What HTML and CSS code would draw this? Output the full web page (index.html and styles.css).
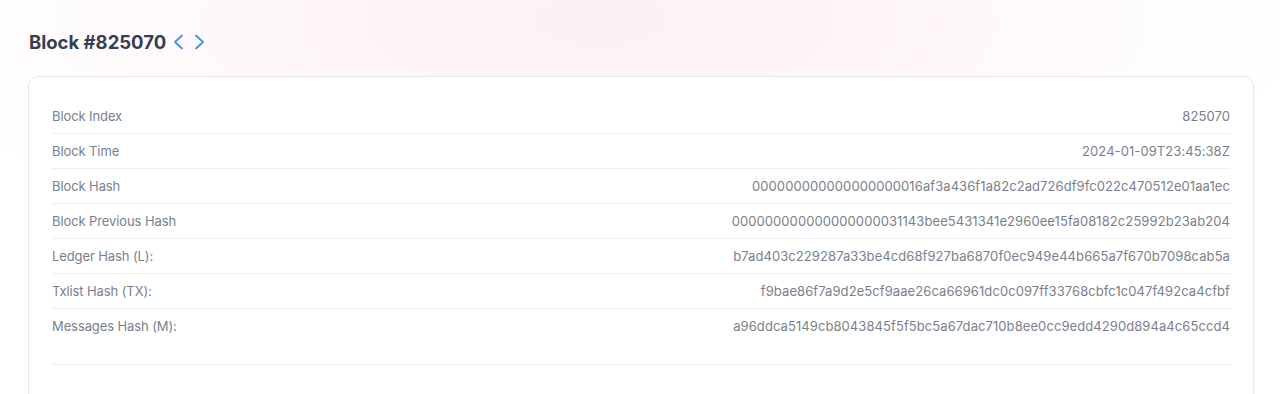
FILE: index.html
```html
<!DOCTYPE html>
<html lang="en">
<head>
  <meta charset="UTF-8">
  <meta name="viewport" content="width=device-width, initial-scale=1.0">
  <title>Block #825070</title>
  <link rel="stylesheet" href="styles.css">
</head>
<body>
  <div class="page">
    <header class="block-header">
      <h2>Block #825070</h2>
      <a class="nav-arrow" href="#" aria-label="Previous block">
        <svg width="12" height="16" viewBox="0 0 12 16"><path d="M10 1.5 L3 8 L10 14.5" fill="none" stroke="currentColor" stroke-width="1.8" stroke-linecap="round" stroke-linejoin="round"/></svg>
      </a>
      <a class="nav-arrow" href="#" aria-label="Next block">
        <svg width="12" height="16" viewBox="0 0 12 16"><path d="M2 1.5 L9 8 L2 14.5" fill="none" stroke="currentColor" stroke-width="1.8" stroke-linecap="round" stroke-linejoin="round"/></svg>
      </a>
    </header>

    <div class="card">
      <div class="info-row">
        <span class="label">Block Index</span>
        <span class="value">825070</span>
      </div>
      <div class="info-row">
        <span class="label">Block Time</span>
        <span class="value">2024-01-09T23:45:38Z</span>
      </div>
      <div class="info-row">
        <span class="label">Block Hash</span>
        <span class="value">000000000000000000016af3a436f1a82c2ad726df9fc022c470512e01aa1ec</span>
      </div>
      <div class="info-row">
        <span class="label">Block Previous Hash</span>
        <span class="value">000000000000000000031143bee5431341e2960ee15fa08182c25992b23ab204</span>
      </div>
      <div class="info-row">
        <span class="label">Ledger Hash (L):</span>
        <span class="value">b7ad403c229287a33be4cd68f927ba6870f0ec949e44b665a7f670b7098cab5a</span>
      </div>
      <div class="info-row">
        <span class="label">Txlist Hash (TX):</span>
        <span class="value">f9bae86f7a9d2e5cf9aae26ca66961dc0c097ff33768cbfc1c047f492ca4cfbf</span>
      </div>
      <div class="info-row last">
        <span class="label">Messages Hash (M):</span>
        <span class="value">a96ddca5149cb8043845f5f5bc5a67dac710b8ee0cc9edd4290d894a4c65ccd4</span>
      </div>
      <hr class="divider">
      <div class="spacer"></div>
    </div>
  </div>
</body>
</html>
```

FILE: styles.css
```css
/* General Styles */
body {
  margin: 0;
  font-family: Inter, "Noto Sans", Arial, sans-serif;
  background: radial-gradient(ellipse 700px 260px at 600px 20px, #fdf0f6 0%, #fef7fa 50%, #ffffff 100%);
  background-color: #fff;
  min-height: 394px;
  overflow: hidden;
}

.page {
  padding: 28px 26px 0 28px;
}

/* Header */
.block-header {
  display: flex;
  align-items: center;
  gap: 6px;
  height: 28px;
  padding-left: 1px;
  margin-bottom: 20px;
}

.block-header h2 {
  margin: 0;
  font-size: 18.5px;
  font-weight: 700;
  color: #353f50;
}

.nav-arrow {
  display: flex;
  color: #3a93e6;
}

.nav-arrow + .nav-arrow {
  margin-left: 4px;
}

/* Card */
.card {
  background-color: #fff;
  border: 1px solid #e8e9ee;
  border-radius: 10px;
  padding: 22px 23px 0 23px;
}

.info-row {
  display: flex;
  justify-content: space-between;
  align-items: center;
  height: 34px;
  border-bottom: 1px solid #eceef1;
  font-size: 13px;
  color: #7a7f8c;
}

.info-row.last {
  border-bottom: none;
}

.label {
  letter-spacing: -0.1px;
}

.value {
  letter-spacing: 0.08px;
}

.divider {
  border: none;
  border-top: 1px solid #eceef1;
  margin: 21px 0 0 0;
}

.spacer {
  height: 40px;
}
```
